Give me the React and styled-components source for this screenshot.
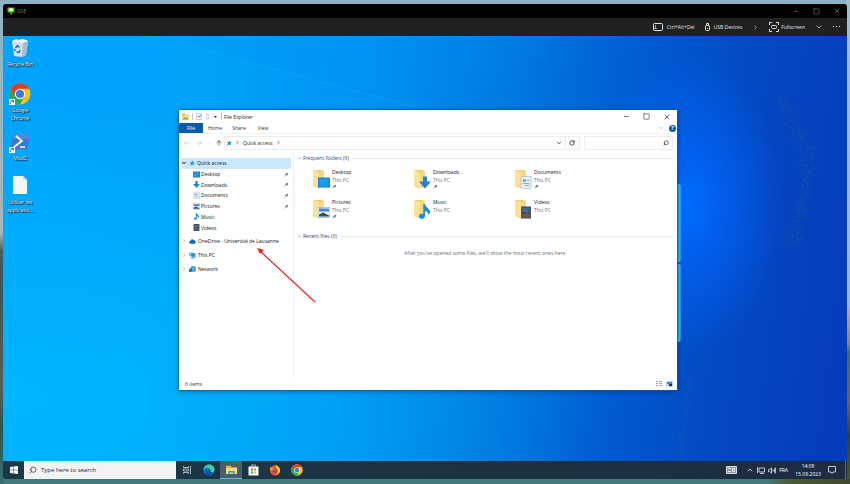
import React from 'react';
import styled, { createGlobalStyle } from 'styled-components';
import {
  ArrowLeft, ArrowRight, ArrowUp, ChevronDown, ChevronRight, ChevronUp,
  Minus, Square, X, Search, RotateCw,
} from 'lucide-react';

const GlobalStyle = createGlobalStyle`
  * { box-sizing: border-box; }
  body {
    margin: 0;
    font-family: 'Open Sans', 'Noto Sans', sans-serif;
    font-size: 5px;
    line-height: 8px;
    color: #111;
  }
  button, input {
    font: inherit;
    color: inherit;
    margin: 0;
    padding: 0;
    border: 0;
    background: none;
    border-radius: 0;
  }
  svg { display: block; flex: none; }
`;

const Page = styled.div`
  min-height: 100vh;
  display: flex;
  padding: 4px 3px 5px;
  background:
    linear-gradient(90deg, transparent 90%, #4c5a35 93%, #3f4a2c) bottom / 100% 5px no-repeat,
    linear-gradient(180deg, #a3bcc6 0%, #9fb6be 63%, #b3a59b 64%, #8a8478 71%, #3e6a6c 73%, #6e6156 83%, #33422c 90%, #47592f 100%) right / 4px 100% no-repeat,
    linear-gradient(180deg, #8fb4c3 0%, #a9b7ba 48%, #4a5a58 52%, #3c5857 60%, #5a5f50 80%, #2d5450 88%, #39706f 100%) left / 4px 100% no-repeat,
    linear-gradient(180deg, #8ab3c4 0%, #8ab3c4 50%, #447a7e 51%, #447a7e 100%);
`;

const Client = styled.div`
  flex: 1;
  display: flex;
  flex-direction: column;
  border-radius: 3px;
  overflow: hidden;
`;

const ClientTitle = styled.header`
  height: 14px;
  display: flex;
  align-items: center;
  gap: 2px;
  padding: 0 6px 0 4px;
  background: #000;
  color: #777;
`;

const ClientTools = styled.div`
  height: 18px;
  display: flex;
  align-items: center;
  justify-content: flex-end;
  gap: 10px;
  padding-right: 6px;
  background: #202020;
  color: #e4e4e4;
`;

const ToolButton = styled.button`
  display: flex;
  align-items: center;
  gap: ${p => p.$gap || 4}px;
  white-space: nowrap;
`;

const WindowButtons = styled.div`
  margin-left: auto;
  display: flex;
  gap: 13px;
`;

const Desktop = styled.main`
  position: relative;
  flex: 1;
  min-height: 425px;
  overflow: hidden;
  background:
    radial-gradient(ellipse 95px 150px at 684px 168px, #006cff 0%, rgba(0, 104, 255, 0.7) 30%, rgba(0, 90, 235, 0) 100%),
    radial-gradient(ellipse 620px 300px at 0% 85%, rgba(0, 186, 255, 0.75), rgba(0, 176, 255, 0) 100%),
    linear-gradient(97deg, #00a4fc 0%, #00a3fa 22%, #0093f1 42%, #007ae0 57%, #005bd1 72%, #0449c3 84%, #053bb8 100%);
`;

const Wallpaper = styled.svg`
  position: absolute;
  inset: 0;
  width: 100%;
  height: 100%;
`;

const Shortcuts = styled.div`
  position: relative;
  width: 34px;
`;

const Shortcut = styled.button`
  display: flex;
  flex-direction: column;
  align-items: center;
  gap: ${p => p.$gap || 2}px;
  width: 34px;
  height: ${p => p.$height}px;
  padding-top: 2px;
  color: #fff;
  text-shadow: 0 0 1px #000, 1px 1px 1px #000;
`;

const Explorer = styled.section`
  position: absolute;
  left: 176px;
  top: 74px;
  width: 59%;
  height: 280px;
  display: flex;
  flex-direction: column;
  background: #fff;
  box-shadow: 0 0 0 1px rgba(20, 95, 160, 0.6), 0 1px 5px rgba(0, 20, 60, 0.5);
`;

const ExplorerTitle = styled.header`
  height: 13px;
  display: flex;
  align-items: center;
  gap: 2px;
  padding: 0 6px 0 3px;
  color: #222;
`;

const Tabs = styled.nav`
  height: 11px;
  display: flex;
  align-items: center;
  padding-right: 1px;
  border-bottom: 1px solid #f1f1f1;
`;

const Tab = styled.button`
  height: 10px;
  width: 24px;
  text-align: center;
  color: ${p => (p.$active ? '#fff' : '#333')};
  background: ${p => (p.$active ? '#0a5cab' : 'none')};
`;

const Help = styled.button`
  width: 7px;
  height: 7px;
  line-height: 7px;
  border-radius: 50%;
  background: #0a5cab;
  color: #fff;
  font-weight: 700;
  margin-left: 5px;
`;

const Spacer = styled.span`
  flex: 1;
`;

const AddressRow = styled.div`
  display: flex;
  align-items: center;
  height: 17px;
  gap: 4px;
  padding: 0 4px 0 4px;
  color: #444;
`;

const NavArrows = styled.div`
  display: flex;
  align-items: center;
  gap: 4px;
  width: 37px;
`;

const Address = styled.div`
  flex: 1;
  height: 14px;
  display: flex;
  align-items: center;
  gap: 3px;
  border: 1px solid #ececec;
  padding-left: 1px;
  color: #222;
`;

const Refresh = styled.button`
  display: grid;
  place-items: center;
  width: 14px;
  height: 12px;
  border-left: 1px solid #ececec;
`;

const SearchBox = styled.label`
  width: 89px;
  height: 14px;
  display: flex;
  align-items: center;
  padding-right: 3px;
  border: 1px solid #ececec;

  input { flex: 1; min-width: 0; outline: 0; }
`;

const Body = styled.div`
  flex: 1;
  display: flex;
  min-height: 0;
`;

const Side = styled.nav`
  width: 115px;
  padding: 7px 2px 0;
  border-right: 1px solid #efefef;
`;

const QuickList = styled.div`
  display: grid;
  grid-auto-rows: 1fr;
  height: 75px;
  margin-bottom: 1px;
`;

const SideItem = styled.button`
  width: 100%;
  height: ${p => (p.$root ? '14px' : 'auto')};
  display: flex;
  align-items: center;
  gap: ${p => (p.$nested ? 1 : 2)}px;
  padding: 0 2px 0 ${p => (p.$nested ? 12 : 0)}px;
  background: ${p => (p.$selected ? '#cce8ff' : 'none')};
  white-space: nowrap;
`;

const Content = styled.div`
  flex: 1;
  padding: 3px 3px 0 3px;
`;

const GroupTitle = styled.h2`
  display: flex;
  align-items: center;
  gap: 1px;
  margin: 0;
  font-size: 5px;
  font-weight: 400;
  line-height: 8px;
  color: #2f4080;

  &::after {
    content: '';
    flex: 1;
    height: 1px;
    margin-left: 2px;
    background: #e6e8ec;
  }
`;

const Folders = styled.div`
  display: grid;
  grid-template-columns: repeat(auto-fill, 101px);
  grid-auto-rows: 30px;
  padding: 6px 0 0 15px;
  height: 70px;
`;

const Folder = styled.button`
  display: flex;
  align-items: flex-start;
  gap: 1px;
  text-align: left;
`;

const FolderText = styled.span`
  display: flex;
  flex-direction: column;

  small { font-size: 5px; color: #737373; }
`;

const Empty = styled.p`
  margin: 9px 0 0;
  text-align: center;
  color: #6d6d6d;
`;

const Status = styled.footer`
  height: 12px;
  display: flex;
  align-items: center;
  gap: 4px;
  padding: 0 4px 0 6px;
  color: #333;
`;

const Arrow = styled.svg`
  position: absolute;
  left: 254px;
  top: 211px;
`;

const Taskbar = styled.footer`
  height: 18px;
  display: flex;
  align-items: stretch;
  background: linear-gradient(90deg, #19394a, #1d3140 60%, #1d2b43);
  color: #fff;
`;

const TaskButton = styled.button`
  width: ${p => p.$width || 22}px;
  display: grid;
  place-items: center;
  background: ${p => (p.$active ? '#46616e' : 'none')};
  border-bottom: 1px solid ${p => (p.$active ? '#76b9ed' : 'transparent')};
`;

const TaskSearch = styled.label`
  width: 152px;
  display: flex;
  align-items: center;
  gap: 4px;
  padding-left: 5px;
  background: #f3f3f3;
  color: #222;

  input {
    flex: 1;
    min-width: 0;
    font-size: 6px;
    outline: 0;
  }
  input::placeholder { color: #222; opacity: 1; }
`;

const Tray = styled.div`
  margin-left: auto;
  display: flex;
  align-items: center;
  gap: 3px;
  padding-right: 1px;
`;

const InputPanel = styled.button`
  margin-right: 6px;
`;

const Clock = styled.time`
  width: 34px;
  text-align: center;
`;

const ShowDesktop = styled.button`
  width: 1px;
  height: 18px;
  margin-left: 6px;
  background: #5d6b7c;
`;

// dust band following a polyline, same result on every render
const makeDust = (path, count, spread, seed) => {
  let s = seed;
  const rand = () => {
    s = (s * 16807) % 2147483647;
    return s / 2147483647;
  };
  return Array.from({ length: count }, () => {
    const t = rand() * (path.length - 1);
    const i = Math.floor(t);
    const f = t - i;
    const [x1, y1] = path[i];
    const [x2, y2] = path[i + 1];
    return [
      x1 + (x2 - x1) * f + (rand() + rand() - 1) * spread,
      y1 + (y2 - y1) * f + (rand() - 0.5) * 8,
    ];
  });
};

const dust = [
  ...makeDust([[778, 62], [790, 85], [802, 110], [804, 135], [800, 160], [796, 185], [790, 208]], 480, 11, 77),
  ...makeDust([[686, 340], [685, 365], [680, 395], [676, 420]], 110, 5, 19),
  ...makeDust([[736, 220], [734, 250], [724, 290]], 16, 8, 5),
];

const WallpaperArt = () => (
  <Wallpaper viewBox="0 0 844 425" preserveAspectRatio="none" aria-hidden="true">
    <path d="M150 0L430 75L560 0z" fill="#0089ee" opacity=".12" />
    <path d="M152 0L430 76" stroke="#5cc4ff" strokeWidth="1" opacity=".16" />
    <path d="M0 340L176 300V425H0z" fill="#0cf" opacity=".06" />
    <g fill="#35608c" opacity=".5">
      {dust.map(([x, y], i) => <rect key={i} x={x} y={y} width="1" height="1" />)}
    </g>
    <path d="M673 149h4v76h-4zM673 229h4v76h-4z" fill="#12a6f4" stroke="#3be1fb" />
  </Wallpaper>
);

const ShortcutMark = () => (
  <g>
    <path d="M0 16h6v6H0z" fill="#fff" />
    <path d="M1 21c0-2 1-3 3-3M2.500 17.500h2v2" fill="none" stroke="#1466b8" />
  </g>
);

const Chrome = ({ size, mark }) => (
  <svg width={size} height={size} viewBox="0 0 22 22">
    <circle cx="11" cy="11" r="10.500" fill="#fbc116" />
    <path d="M11 11L1.900 5.700A10.500 10.500 0 0 0 11 21.500L15.500 13.500z" fill="#2da94f" />
    <path d="M11 5.700h9.100A10.500 10.500 0 0 0 1.900 5.700L6.400 13.500z" fill="#e33b2e" />
    <circle cx="11" cy="11" r="5.200" fill="#fff" />
    <circle cx="11" cy="11" r="4.100" fill="#3b78e7" />
    {mark && <ShortcutMark />}
  </svg>
);

const RecycleBin = () => (
  <svg width="18" height="20" viewBox="0 0 18 20">
    <path d="M1 3l11-2 5 2-2 14-4 2-8-1z" fill="#d3e2ea" />
    <path d="M12 5l5-2-2 14-4 2z" fill="#a8bdca" />
    <path d="M1 3l4-2 3 1 4-1 5 2-5 2z" fill="#eef4f6" />
    <path d="M4.500 10l2-2.500 2 2M9 12l-1 2.500-2.500-.5M4 13l-.5-2" fill="none" stroke="#1c6bc4" strokeWidth="1.500" />
  </svg>
);

const PowerShell = () => (
  <svg width="22" height="22" viewBox="0 0 22 22">
    <path d="M5 3h16l-3 15H1z" fill="#3f74cf" />
    <path d="M5 3h16l-1 5H4z" fill="#5287dd" />
    <path d="M7 5l6 5-8 6M11 16h5" fill="none" stroke="#fff" strokeWidth="1.700" />
    <ShortcutMark />
  </svg>
);

const BlankPage = () => (
  <svg width="16" height="20" viewBox="0 0 16 20">
    <path d="M1 1h10l4 4v14H1z" fill="#f6f6f6" />
    <path d="M11 1v4h4z" fill="#cfd8dc" />
  </svg>
);

const Star = () => (
  <svg width="6" height="6" viewBox="0 0 12 12">
    <path d="M7 0l1 4 4 1-3 2 1 4-4-2-5 3 3-5-2-3 4 0z" fill="#2792dd" />
  </svg>
);

const Pin = () => (
  <svg width="5" height="5" viewBox="0 0 10 10">
    <path d="M6 1l3 3-1 .5-1.500 1.500-.5 2-4-4 2-.5L5.500 2z" fill="#6d7780" />
    <path d="M4 6L1 9" stroke="#6d7780" strokeWidth="1.200" />
  </svg>
);

// small glyphs of the places, drawn in a 12 unit box
const places = {
  Desktop: <><path d="M0 1h12v10H0z" fill="#1579c9" /><path d="M1 2h10v8H1z" fill="#1c9af0" /></>,
  Downloads: <path d="M4 0h4v5h4l-6 7-6-7h4z" fill="#2383d1" />,
  Documents: <><path d="M1 0h10v12H1z" fill="#e6eef3" stroke="#a3b6c2" strokeWidth=".6" /><path d="M3 3h3v2H3z" fill="#4b93cf" /><path d="M7 4h2M3 7h6M5 9h4" stroke="#6b9cbd" strokeWidth=".8" /></>,
  Pictures: <><path d="M0 1h12v10H0z" fill="#e4eff7" stroke="#8aa6b9" strokeWidth=".6" /><path d="M1 2h10v3H1z" fill="#4a83d4" /><path d="M1 10V8l4-2 6 3v1z" fill="#24536b" /></>,
  Music: <path d="M5 0h1.500c0 3 4 3 4 7L9 9c.5-2-1-3-2.500-3.500V9c0 4-5 3.500-5 1S4 7.500 5 8z" fill="#1a8ee0" />,
  Videos: <><path d="M1 0h10v12H1z" fill="#3d4144" /><path d="M3 1h6v4H3z" fill="#40679c" /><path d="M3 7h6v4H3z" fill="#6d5a58" /><path d="M4 5l2-3 2 5z" fill="#3477c4" /><path d="M2 0v12M10 0v12" stroke="#aaa" strokeDasharray="1 1" strokeWidth=".8" /></>,
  OneDrive: <path d="M3 10C-1 10-.5 5 2.500 5 3 2 7 1 8.500 4c3-.5 4.500 5.500 1 6z" fill="#0a68c0" />,
  PC: <><path d="M0 1h8v6H0zM2 9l7-4 3 5-7 2z" fill="#7cbdea" /><path d="M4 2h7v6H4z" fill="#2690dd" /></>,
  Network: <><circle cx="7" cy="5" r="5" fill="#3194d7" /><path d="M7 0v10M2 5h10" stroke="#9ad4f6" /><path d="M0 5h5v5H0z" fill="#176fb8" /></>,
};

const Place = ({ name }) => (
  <svg width="7" height="7" viewBox="0 0 12 12">{places[name]}</svg>
);

const FolderIcon = ({ name }) => (
  <svg width="19" height="22" viewBox="1 1 19 22">
    <path d="M2 3h8l3 1v16l-6 1-5-2z" fill="#f3cd68" />
    <path d="M2 3l6 2v16l-6-3z" fill="#fce299" />
    <path d="M8 5l5-1v15l-5 1z" fill="#f7d87d" />
    <svg
      x={name === 'Music' ? 5 : 7}
      y={name === 'Music' ? 7 : 9}
      width={name === 'Music' ? 15 : 12}
      height={name === 'Music' ? 15 : 13}
      viewBox="0 0 12 12"
    >
      {places[name]}
    </svg>
  </svg>
);

const MiniFolder = ({ width = 7, height = 7 }) => (
  <svg width={width} height={height} viewBox="0 0 14 12" preserveAspectRatio="none">
    <path d="M0 1h6l1 2h7v9H0z" fill="#e9b73e" />
    <path d="M0 4h14v8H0z" fill="#fddb78" />
    <path d="M3 12V8h8v4H9v-2H5v2z" fill="#3f93d6" />
  </svg>
);

const Edge = () => (
  <svg width="12" height="12" viewBox="0 0 24 24">
    <circle cx="12" cy="12" r="11" fill="#1477cb" />
    <path d="M1 11C2 4 7 1 12 1c7 0 11 5 11 10 0 4-4 6-8 5 2-3 1-7-4-8C6 7 3 9 1 11z" fill="#48d39a" />
    <path d="M1 12C2 3 9 0 14 2 8 3 7 8 3 10z" fill="#29b5da" />
    <path d="M9 11c-2 5 3 10 11 9-5 5-15 3-15-4 0-3 2-5 4-5z" fill="#0c4f9d" />
    <path d="M12 11c2 1 1 4 3 5 2 1 4 1 6 0-3 3-7 3-9 1-2-1-1-5 0-6z" fill="#1f3b4c" />
  </svg>
);

const Store = () => (
  <svg width="11" height="12" viewBox="0 0 22 24">
    <path d="M7 5V2h8v3" fill="none" stroke="#ddd" strokeWidth="1.500" />
    <path d="M1 5h20v18H1z" fill="#fafafa" />
    <path d="M6 9h4v4H6z" fill="#f25022" />
    <path d="M12 9h4v4h-4z" fill="#7fba00" />
    <path d="M6 15h4v4H6z" fill="#00a4ef" />
    <path d="M12 15h4v4h-4z" fill="#ffb900" />
  </svg>
);

const Firefox = () => (
  <svg width="12" height="12" viewBox="0 0 24 24">
    <circle cx="12" cy="13" r="10" fill="#f4522f" />
    <path d="M13 1c2 3 10 4 9 13-1 5-5 8-9 9 6-4 7-10 2-15-2-2-2-5-2-7z" fill="#ffc928" />
    <path d="M3 5l3 2 5 1-1 4-5 2-3-3z" fill="#ff9626" />
    <circle cx="11" cy="13" r="4.500" fill="#7543c9" />
    <path d="M6 11c3-2 6 1 9-1-1 3-5 3-6 3z" fill="#ff7a2a" />
  </svg>
);

const Caption = ({ label }) => (
  <WindowButtons>
    <button aria-label={`Minimize ${label}`}><Minus size={7} strokeWidth={2} /></button>
    <button aria-label={`Maximize ${label}`}><Square size={7} strokeWidth={2} /></button>
    <button aria-label={`Close ${label}`}><X size={8} strokeWidth={2} /></button>
  </WindowButtons>
);

const quickItems = [
  ['Desktop', true], ['Downloads', true], ['Documents', true],
  ['Pictures', true], ['Music', false], ['Videos', false],
];

const roots = [
  ['OneDrive', 'OneDrive - Université de Lausanne'],
  ['PC', 'This PC'],
  ['Network', 'Network'],
];

const FileExplorer = () => (
  <Explorer>
    <ExplorerTitle>
      <MiniFolder />
      <svg width="20" height="7" viewBox="0 0 20 7">
        <path d="M1.500 0v7" stroke="#ccc" />
        <path d="M5.500.500h5v6h-5z" fill="#eef3f8" stroke="#c7d5e5" />
        <path d="M7 3l1 1 2-2" stroke="#6b8fbd" fill="none" />
        <path d="M15.500 .500h2v6h-2z" fill="#e8eefa" stroke="#d3def1" />
      </svg>
      <svg width="9" height="7" viewBox="0 0 9 7">
        <path d="M1 3h3L2.500 5z" fill="#333" />
        <path d="M8.500 0v7" stroke="#bbb" />
      </svg>
      <span>File Explorer</span>
      <Caption label="File Explorer" />
    </ExplorerTitle>
    <Tabs>
      <Tab $active>File</Tab>
      <Tab>Home</Tab>
      <Tab>Share</Tab>
      <Tab>View</Tab>
      <Spacer />
      <ChevronDown size={6} color="#999" />
      <Help aria-label="Help">?</Help>
    </Tabs>
    <AddressRow>
      <NavArrows>
        <ArrowLeft size={8} color="#ccc" />
        <ArrowRight size={8} color="#ccc" />
        <ChevronDown size={4} color="#bbb" />
        <ArrowUp size={8} />
      </NavArrows>
      <Address>
        <Star />
        <ChevronRight size={5} strokeWidth={3} />
        <span>Quick access</span>
        <ChevronRight size={5} strokeWidth={3} />
        <Spacer />
        <ChevronDown size={6} strokeWidth={3} />
        <Refresh aria-label="Refresh"><RotateCw size={6} strokeWidth={3} /></Refresh>
      </Address>
      <SearchBox>
        <input type="text" aria-label="Search Quick access" />
        <Search size={6} strokeWidth={3} transform="scale(-1 1)" />
      </SearchBox>
    </AddressRow>
    <Body>
      <Side>
        <QuickList>
          <SideItem $selected>
            <ChevronDown size={6} strokeWidth={4} />
            <Star />
            <span>Quick access</span>
          </SideItem>
          {quickItems.map(([name, pinned]) => (
            <SideItem key={name} $nested>
              <Place name={name} />
              <span>{name}</span>
              <Spacer />
              {pinned && <Pin />}
            </SideItem>
          ))}
        </QuickList>
        {roots.map(([icon, label]) => (
          <SideItem key={label} $root>
            <ChevronRight size={6} color="#777" />
            <Place name={icon} />
            <span>{label}</span>
          </SideItem>
        ))}
      </Side>
      <Content>
        <GroupTitle><ChevronDown size={5} />Frequent folders (6)</GroupTitle>
        <Folders>
          {quickItems.map(([name, pinned]) => (
            <Folder key={name}>
              <FolderIcon name={name} />
              <FolderText>
                <span>{name}</span>
                <small>This PC</small>
                {pinned && <Pin />}
              </FolderText>
            </Folder>
          ))}
        </Folders>
        <GroupTitle><ChevronDown size={5} />Recent files (0)</GroupTitle>
        <Empty>After you've opened some files, we'll show the most recent ones here.</Empty>
      </Content>
    </Body>
    <Status>
      <span>6 items</span>
      <Spacer />
      <svg width="6" height="6" viewBox="0 0 6 6"><path d="M0 .500h2M3 .500h3M0 2.500h2M3 2.500h3M0 4.500h2M3 4.500h3" stroke="#a5a5a5" /></svg>
      <svg width="7" height="6" viewBox="0 0 7 6"><path d="M0 0h7v6H0z" fill="#bcdcf2" /><path d="M1 1h5v2H1z" fill="#4a86bb" /><path d="M3 3h3v2H3z" fill="#222f38" /></svg>
    </Status>
  </Explorer>
);

const App = () => (
  <Page>
    <GlobalStyle />
    <Client>
      <ClientTitle>
        <svg width="8" height="8" viewBox="0 0 16 16">
          <path d="M1 1h14v10h-5v4H7v-4H1z" fill="#5db82a" />
          <path d="M4 4c2-2 6-2 8 0v3c-2 2-6 2-8 0z" fill="#f3fbe9" />
        </svg>
        <span>GSE</span>
        <Caption label="GSE" />
      </ClientTitle>
      <ClientTools>
        <ToolButton>
          <svg width="10" height="8" viewBox="0 0 10 8" fill="none" stroke="currentColor">
            <rect x=".5" y=".5" width="9" height="7" rx="1" />
            <path d="M2.500 2v4M1 5.500h3" opacity=".6" />
          </svg>
          Ctrl+Alt+Del
        </ToolButton>
        <ToolButton>
          <svg width="5" height="8" viewBox="0 0 5 8" fill="none" stroke="currentColor">
            <rect x=".5" y="2.500" width="4" height="5" rx="1" />
            <path d="M1.500 2.500v-2h2v2M2 5.500h1" />
          </svg>
          USB Devices
        </ToolButton>
        <ToolButton aria-label="More devices"><ChevronRight size={7} /></ToolButton>
        <ToolButton $gap={2}>
          <svg width="10" height="10" viewBox="0 0 10 10" fill="none" stroke="currentColor">
            <path d="M.500 3V.500H3M7 .500h2.500V3M9.500 7v2.500H7M3 9.500H.500V7" />
            <rect x="2.500" y="3.500" width="5" height="3" rx="1" />
          </svg>
          Fullscreen
        </ToolButton>
        <ToolButton aria-label="Screen options"><ChevronDown size={8} /></ToolButton>
        <ToolButton aria-label="More">
          <svg width="8" height="2" viewBox="0 0 8 2" fill="currentColor"><path d="M0 0h1v1H0zM3 0h1v1H3zM6 0h1v1H6z" /></svg>
        </ToolButton>
      </ClientTools>
      <Desktop>
        <WallpaperArt />
        <Shortcuts>
          <Shortcut $height={45}><RecycleBin />Recycle Bin</Shortcut>
          <Shortcut $height={48} $gap={1}><Chrome size={22} mark />Google Chrome</Shortcut>
          <Shortcut $height={44} $gap={1}><PowerShell />ModZ</Shortcut>
          <Shortcut $height={44} $gap={3}><BlankPage />Utiliser les applicatio...</Shortcut>
        </Shortcuts>
        <FileExplorer />
        <Arrow width="62" height="58" viewBox="0 0 62 58">
          <path d="M3 4l55 51" stroke="#ed2024" strokeWidth="1.200" />
          <path d="M0 1l7 2-4 4z" fill="#ed2024" />
        </Arrow>
      </Desktop>
      <Taskbar>
        <TaskButton $width={21} aria-label="Start">
          <svg width="8" height="8" viewBox="0 0 16 16" fill="#fff"><path d="M0 2l7-1v6.500H0zM8 1l8-1v7.500H8zM0 8.500h7V15l-7-1zM8 8.500h8V16l-8-1z" /></svg>
        </TaskButton>
        <TaskSearch>
          <Search size={8} transform="scale(-1 1)" />
          <input type="text" placeholder="Type here to search" aria-label="Type here to search" />
        </TaskSearch>
        <TaskButton aria-label="Task view">
          <svg width="9" height="8" viewBox="0 0 9 8" fill="none" stroke="#c6ced3" strokeWidth=".8"><path d="M.5 0v1.500h5V0M.5 8V6.500h5V8M.5 3h5v2h-5zM7.500 0v8" /></svg>
        </TaskButton>
        <TaskButton aria-label="Edge"><Edge /></TaskButton>
        <TaskButton $active aria-label="File Explorer"><MiniFolder width={11} height={9} /></TaskButton>
        <TaskButton aria-label="Store"><Store /></TaskButton>
        <TaskButton aria-label="Firefox"><Firefox /></TaskButton>
        <TaskButton aria-label="Chrome"><Chrome size={12} /></TaskButton>
        <Tray>
          <InputPanel aria-label="Touch keyboard">
            <svg width="11" height="8" viewBox="0 0 11 8">
              <path d="M.5.500h10v7H.5z" fill="#8f9aa5" stroke="#d7dde2" />
              <path d="M2 2.500h3M2 5.500h3M6.500 2.500h2v3h-2z" stroke="#e6ebef" fill="none" />
            </svg>
          </InputPanel>
          <ChevronUp size={8} />
          <svg width="8" height="7" viewBox="0 0 8 7" fill="none" stroke="#e6eaee" strokeWidth=".8"><path d="M2 1h5.500v4H2zM.5 0v6M3 6.500h4" /></svg>
          <svg width="8" height="7" viewBox="0 0 8 7" fill="none" stroke="#e6eaee" strokeWidth=".8"><path d="M.5 2.500h1L3.500 1v5l-2-1.500h-1zM5 2.500v2M6.500 1.500v4M7.600.500v6" /></svg>
          <span>FRA</span>
          <Clock>14:09<br />15.09.2023</Clock>
          <svg width="8" height="8" viewBox="0 0 8 8" fill="none" stroke="#e6eaee" strokeWidth=".8"><path d="M.5.500h7V6H5L4 7.500 3 6H.5z" /></svg>
          <ShowDesktop aria-label="Show desktop" />
        </Tray>
      </Taskbar>
    </Client>
  </Page>
);

export default App;
